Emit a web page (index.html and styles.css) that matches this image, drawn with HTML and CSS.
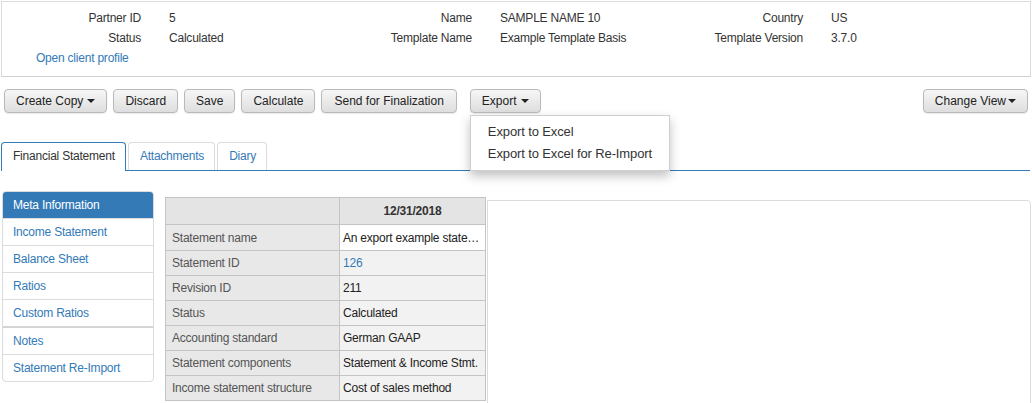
FILE: index.html
```html
<!DOCTYPE html>
<html>
<head>
<meta charset="utf-8">
<title>Financial Statement</title>
<link rel="stylesheet" href="styles.css">
</head>
<body>
<div class="client-panel">
  <div class="info-grid">
    <div class="lbl">Partner ID</div><div class="val">5</div>
    <div class="lbl">Name</div><div class="val">SAMPLE NAME 10</div>
    <div class="lbl">Country</div><div class="val">US</div>
    <div class="lbl">Status</div><div class="val">Calculated</div>
    <div class="lbl">Template Name</div><div class="val">Example Template Basis</div>
    <div class="lbl">Template Version</div><div class="val">3.7.0</div>
  </div>
  <div class="profile-row"><a class="link" href="#">Open client profile</a></div>
</div>

<div class="toolbar">
  <button class="btn">Create Copy<span class="caret"></span></button>
  <button class="btn">Discard</button>
  <button class="btn">Save</button>
  <button class="btn">Calculate</button>
  <button class="btn btn-wide">Send for Finalization</button>
  <div class="dropdown">
    <button class="btn">Export<span class="caret"></span></button>
    <div class="menu">
      <div class="menu-item">Export to Excel</div>
      <div class="menu-item">Export to Excel for Re-Import</div>
    </div>
  </div>
  <button class="btn btn-right">Change View<span class="caret caret-tight"></span></button>
</div>

<div class="tabs">
  <div class="tab active">Financial Statement</div>
  <div class="tab">Attachments</div>
  <div class="tab">Diary</div>
</div>

<div class="main">
  <div class="side-nav">
    <div class="nav-item active">Meta Information</div>
    <div class="nav-item">Income Statement</div>
    <div class="nav-item">Balance Sheet</div>
    <div class="nav-item">Ratios</div>
    <div class="nav-item">Custom Ratios</div>
    <div class="nav-item sep">Notes</div>
    <div class="nav-item">Statement Re-Import</div>
  </div>
  <table class="meta-table">
    <thead>
      <tr><th class="th-lbl"></th><th class="th-val">12/31/2018</th></tr>
    </thead>
    <tbody>
      <tr class="first-row"><td class="c-lbl">Statement name</td><td class="c-val white">An export example statement</td></tr>
      <tr><td class="c-lbl">Statement ID</td><td class="c-val"><a class="link" href="#">126</a></td></tr>
      <tr><td class="c-lbl">Revision ID</td><td class="c-val">211</td></tr>
      <tr><td class="c-lbl">Status</td><td class="c-val">Calculated</td></tr>
      <tr><td class="c-lbl">Accounting standard</td><td class="c-val">German GAAP</td></tr>
      <tr><td class="c-lbl">Statement components</td><td class="c-val">Statement &amp; Income Stmt.</td></tr>
      <tr><td class="c-lbl">Income statement structure</td><td class="c-val">Cost of sales method</td></tr>
    </tbody>
  </table>
  <div class="side-box"></div>
</div>
</body>
</html>
```

FILE: styles.css
```css
html, body {
  margin: 0;
  padding: 0;
  overflow: hidden;
  background: #fff;
}
body {
  font-family: "Liberation Sans", Arial, sans-serif;
  font-size: 12px;
  letter-spacing: -0.22px;
  color: #333;
  height: 403px;
}
.link {
  color: #337ab7;
  text-decoration: none;
}

/* client panel */
.client-panel {
  margin: 1px 1px 0 1px;
  height: 74px;
  border: 1px solid #dcdcdc;
  border-bottom-color: #cfcfcf;
}
.info-grid {
  display: grid;
  grid-template-columns: 131px 200px 131px 200px 131px 200px;
  padding: 6px 0 0 8px;
  line-height: 20px;
}
.lbl {
  text-align: right;
}
.val {
  padding-left: 28px;
}
.profile-row {
  line-height: 20px;
  padding-left: 34px;
}

/* toolbar */
.toolbar {
  display: flex;
  align-items: center;
  margin-top: 12px;
  padding: 0 4px;
  gap: 6px;
}
.btn {
  height: 24px;
  padding: 0 11px;
  font-family: "Liberation Sans", Arial, sans-serif;
  font-size: 12px;
  letter-spacing: 0;
  color: #222;
  background: linear-gradient(#f6f6f6, #dedede);
  border: 1px solid #b9b9b9;
  border-radius: 4px;
  box-shadow: 0 1px 1px rgba(0,0,0,0.08);
  display: inline-flex;
  align-items: center;
  white-space: nowrap;
  cursor: pointer;
}
.btn-wide {
  padding: 0 12px;
}
.caret {
  display: inline-block;
  width: 0;
  height: 0;
  margin-left: 4px;
  border-top: 4px solid #222;
  border-left: 4px solid transparent;
  border-right: 4px solid transparent;
}
.caret-tight {
  margin-left: 2px;
}
.dropdown {
  position: relative;
  margin-left: 7px;
}
.menu {
  position: absolute;
  left: 0;
  top: calc(100% + 2px);
  width: 198px;
  padding: 5px 0;
  background: #fff;
  border: 1px solid #cfcfcf;
  box-shadow: 0 5px 10px rgba(0,0,0,0.25);
  z-index: 10;
}
.menu-item {
  height: 22px;
  line-height: 22px;
  padding-left: 17px;
  font-size: 13px;
  letter-spacing: -0.12px;
  color: #333;
  white-space: nowrap;
}
.btn-right {
  margin-left: auto;
}

/* tabs */
.tabs {
  display: flex;
  gap: 2px;
  margin: 29px 2px 0 1px;
  border-bottom: 1px solid #337ab7;
  height: 28px;
}
.tab {
  height: 27px;
  line-height: 27px;
  padding: 0 10px 0 11px;
  border: 1px solid #dcdcdc;
  border-bottom: none;
  border-radius: 4px 4px 0 0;
  color: #337ab7;
  background: #fff;
}
.tab.active {
  height: 28px;
  border-color: #337ab7;
  color: #333;
  margin-bottom: -1px;
}

/* main */
.main {
  display: flex;
  align-items: flex-start;
  margin-top: 20px;
  padding-left: 2px;
}
.side-nav {
  width: 150px;
  border: 1px solid #dcdcdc;
  border-radius: 4px;
  overflow: hidden;
  flex: none;
}
.nav-item {
  height: 26px;
  line-height: 26px;
  padding-left: 10px;
  border-top: 1px solid #dcdcdc;
  color: #337ab7;
  white-space: nowrap;
}
.nav-item.active {
  background: #337ab7;
  color: #fff;
  border-top: none;
}
.nav-item.sep {
  border-top: 2px solid #d4d4d4;
}

.meta-table {
  margin: 6px 0 0 11px;
  border-collapse: collapse;
  table-layout: fixed;
  width: 319px;
  flex: none;
}
.meta-table th, .meta-table td {
  border: 1px solid #c4c4c4;
  height: 24px;
  padding: 0;
  white-space: nowrap;
  overflow: hidden;
  text-overflow: ellipsis;
}
.meta-table .first-row td {
  height: 25px;
}
.meta-table th {
  height: 26px;
  background: #e4e4e4;
  font-weight: bold;
  color: #333;
}
.th-lbl { width: 173px; background: #e6e6e6; }
.th-val { width: 145px; }
.c-lbl {
  background: #e8e8e8;
  color: #555;
  padding-left: 6px !important;
}
.c-val {
  background: #f2f2f2;
  color: #222;
  padding-left: 3px !important;
}
.c-val.white {
  background: #fff;
}
.side-box {
  flex: 1;
  margin: 9px 1px 0 1px;
  height: 210px;
  border: 1px solid #dcdcdc;
  border-radius: 0 4px 0 0;
}
```
